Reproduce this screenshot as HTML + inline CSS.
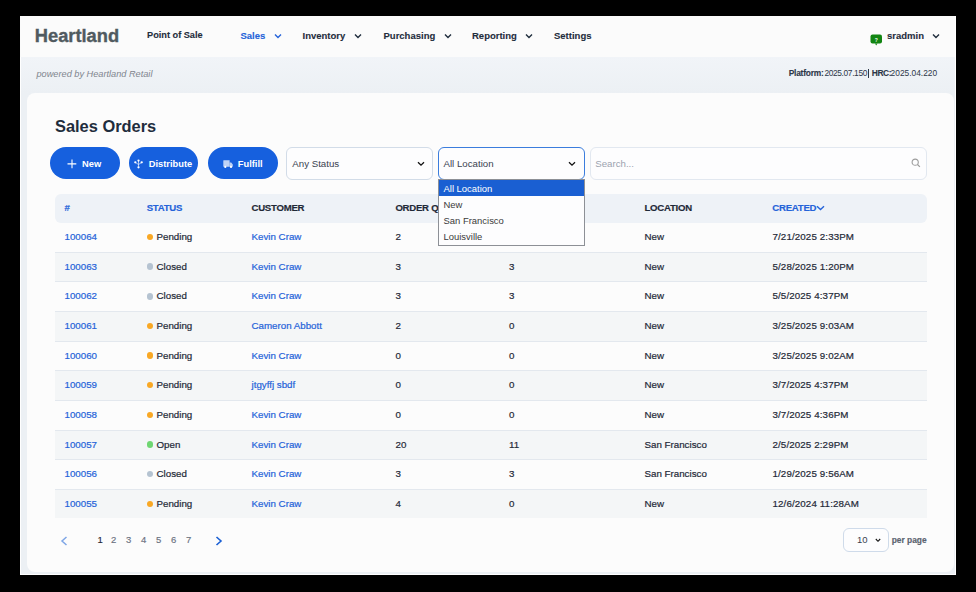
<!DOCTYPE html>
<html><head><meta charset="utf-8">
<style>
*{box-sizing:border-box;margin:0;padding:0}
html,body{width:976px;height:592px;overflow:hidden;background:#000}
body{position:relative;font-family:"Liberation Sans",sans-serif;color:#1f2937}
.a{position:absolute;white-space:nowrap;line-height:1}
#win{position:absolute;left:20px;top:16px;width:936px;height:559px;background:#fff}
#hdr{position:absolute;left:20px;top:16px;width:935px;height:40.5px;background:#fbfbfb}
#sub{position:absolute;left:21px;top:56.5px;width:934px;height:517.5px;background:linear-gradient(#f1f4f8,#ecf0f4 37px)}
#card{position:absolute;left:27px;top:93px;width:927px;height:479px;background:#fcfcfc;border-radius:8px}
.logo{left:34.8px;top:27px;font-size:18.3px;font-weight:bold;color:#505a60;-webkit-text-stroke:0.35px #505a60}
.nav{top:31px;font-size:9.5px;font-weight:bold;color:#1f2d3d;-webkit-text-stroke:0.1px currentColor}
.pw{left:36.5px;top:70px;font-size:9.2px;font-style:italic;color:#7f858e}
.plat{top:69px;font-size:8.4px;color:#2d3748}
.plat.b{-webkit-text-stroke:0.1px currentColor}
.title{left:55px;top:118px;font-size:16.4px;font-weight:bold;color:#1f2d3d}
.btn{position:absolute;top:147.3px;width:69.5px;height:32px;border-radius:16px;background:#1660de}
.bt{top:159.6px;font-size:9.3px;font-weight:bold;color:#fff}
.sel{position:absolute;top:147px;height:32.5px;border:1px solid #d2dce8;border-radius:6px;background:#fdfdfe}
.st{font-size:9.7px;color:#3a4250}
.th{top:203.4px;font-size:9.6px;letter-spacing:-0.25px;font-weight:bold;color:#1f2937;-webkit-text-stroke:0.15px currentColor}
.blue{color:#2563d9}
#thead{position:absolute;left:55px;top:193.5px;width:871.5px;height:29px;background:#eef2f7;border-radius:6px}
.row{position:absolute;left:55px;width:871.5px;height:29.65px;border-top:1px solid #e3e8ee}
.c{position:absolute;top:9.2px;font-size:9.75px;-webkit-text-stroke:0.2px currentColor;line-height:1;color:#1f2937;white-space:nowrap}
.c.l{color:#2563d9}
.row.first{border-top:none;height:29.1px}
.row.first .c{top:9.7px}
.row.first .dot{top:11.3px}
.dot{position:absolute;left:91.6px;top:10.8px;width:6.5px;height:6.5px;border-radius:50%}
#dd{position:absolute;left:438px;top:179.2px;width:147px;height:66.4px;background:#fdfdfe;border:1px solid #8d9096}
.opt{position:absolute;left:0;width:145px;height:16px;font-size:9.45px;color:#3a3a3a;padding-left:4.5px;line-height:17.3px}
.pg{top:534.5px;font-size:9.5px;color:#6b7280;-webkit-text-stroke:0.15px currentColor}
</style></head><body>
<div id="win"></div>
<div id="hdr"></div>
<div id="sub"></div>
<div id="card"></div>

<div class="a logo">Heartland</div>
<div class="a nav" style="left:147px;font-size:9.2px">Point of Sale</div>
<div class="a nav" style="left:240.5px;color:#2563d9">Sales</div>
<svg class="a" style="left:273.5px;top:33px" width="8" height="6" viewBox="0 0 8 6"><path d="M1 1.5 L4 4.5 L7 1.5" fill="none" stroke="#2563d9" stroke-width="1.4"/></svg>
<div class="a nav" style="left:302.5px">Inventory</div>
<svg class="a" style="left:354px;top:33px" width="8" height="6" viewBox="0 0 8 6"><path d="M1 1.5 L4 4.5 L7 1.5" fill="none" stroke="#1f2d3d" stroke-width="1.4"/></svg>
<div class="a nav" style="left:383.5px">Purchasing</div>
<svg class="a" style="left:443.5px;top:33px" width="8" height="6" viewBox="0 0 8 6"><path d="M1 1.5 L4 4.5 L7 1.5" fill="none" stroke="#1f2d3d" stroke-width="1.4"/></svg>
<div class="a nav" style="left:472px">Reporting</div>
<svg class="a" style="left:524.5px;top:33px" width="8" height="6" viewBox="0 0 8 6"><path d="M1 1.5 L4 4.5 L7 1.5" fill="none" stroke="#1f2d3d" stroke-width="1.4"/></svg>
<div class="a nav" style="left:554px">Settings</div>

<svg class="a" style="left:870px;top:33.6px" width="13" height="12" viewBox="0 0 13 12"><rect x="0.5" y="0.5" width="11.5" height="9" rx="2" fill="#128512"/><path d="M5 9.5 L6.2 11.5 L7.5 9.5Z" fill="#128512"/><text x="6.25" y="7.5" font-size="5" font-family="Liberation Sans" font-weight="bold" fill="#fff" text-anchor="middle">?</text></svg>
<div class="a nav" style="left:887px;top:31px;font-size:9.5px">sradmin</div>
<svg class="a" style="left:932px;top:33px" width="8" height="6" viewBox="0 0 8 6"><path d="M1 1.5 L4 4.5 L7 1.5" fill="none" stroke="#1f2d3d" stroke-width="1.4"/></svg>

<div class="a pw">powered by Heartland Retail</div>
<div class="a plat b" style="left:788.7px;font-weight:bold;letter-spacing:-0.22px">Platform:</div>
<div class="a plat" style="left:824.4px;letter-spacing:-0.36px">2025.07.150</div>
<div class="a" style="left:868px;top:69px;width:1px;height:9px;background:#2d3748"></div>
<div class="a plat b" style="left:871.8px;font-weight:bold;letter-spacing:-0.4px">HRC:</div>
<div class="a plat" style="left:890.6px">2025.04.220</div>

<div class="a title">Sales Orders</div>

<div class="btn" style="left:50.3px"></div>
<svg class="a" style="left:67.3px;top:158.8px" width="10" height="10" viewBox="0 0 10 10"><path d="M5 0.5V9.3M0.5 4.9H9.3" stroke="#fff" stroke-width="1.1"/></svg>
<div class="a bt" style="left:82px">New</div>
<div class="btn" style="left:128.8px"></div>
<svg class="a" style="left:134.1px;top:158.5px" width="9" height="10" viewBox="0 0 9 10"><path d="M4.5 1.6V7.6M1.3 3.3L4.5 5.6L7.8 3.3" fill="none" stroke="#fff" stroke-width="0.75" opacity="0.85"/><circle cx="4.5" cy="1.6" r="1.15" fill="#fff"/><circle cx="1.3" cy="3.3" r="1.15" fill="#fff"/><circle cx="7.7" cy="3.3" r="1.15" fill="#fff"/><circle cx="4.5" cy="8.3" r="1.15" fill="#fff"/></svg>
<div class="a bt" style="left:148.8px">Distribute</div>
<div class="btn" style="left:208.1px"></div>
<svg class="a" style="left:223px;top:159.5px" width="10" height="8" viewBox="0 0 10 8"><path d="M0.3 0.6Q0.3 0.3 0.8 0.3H6.6V6.8H0.8Q0.3 6.8 0.3 6.3Z" fill="#fff" opacity="0.72"/><path d="M6.6 2.6H8.2L9.8 4.6V6.8H6.6Z" fill="#fff" opacity="0.72"/><circle cx="2.3" cy="6.9" r="1.1" fill="#fff"/><circle cx="8" cy="6.9" r="1.1" fill="#fff"/></svg>
<div class="a bt" style="left:237.8px">Fulfill</div>

<div class="sel" style="left:286.2px;width:147.1px"></div>
<div class="a st" style="left:292.3px;top:158.7px">Any Status</div>
<svg class="a" style="left:416.5px;top:160.5px" width="8" height="6" viewBox="0 0 8 6"><path d="M1 1.2 L4 4.2 L7 1.2" fill="none" stroke="#111" stroke-width="1.3"/></svg>
<div class="sel" style="left:438px;width:146.6px;border-color:#3b7ddd"></div>
<div class="a st" style="left:443.5px;top:158.7px">All Location</div>
<svg class="a" style="left:567.5px;top:160.5px" width="8" height="6" viewBox="0 0 8 6"><path d="M1 1.2 L4 4.2 L7 1.2" fill="none" stroke="#111" stroke-width="1.3"/></svg>
<div class="sel" style="left:590px;width:336.8px;border-color:#e2e8f0"></div>
<div class="a st" style="left:595.2px;top:158.7px;color:#9ca3af">Search...</div>
<svg class="a" style="left:911.3px;top:158.3px" width="10" height="10" viewBox="0 0 10 10"><circle cx="4.2" cy="4.2" r="3.1" fill="none" stroke="#9c9c9c" stroke-width="1.1"/><path d="M6.5 6.5L8.9 8.9" stroke="#9c9c9c" stroke-width="1.2"/></svg>

<div id="thead"></div>
<div class="a th blue" style="left:64.6px">#</div>
<div class="a th blue" style="left:146.7px">STATUS</div>
<div class="a th" style="left:251.5px">CUSTOMER</div>
<div class="a th" style="left:395.4px">ORDER QTY</div>
<div class="a th" style="left:509px">FULFILLED</div>
<div class="a th" style="left:644.5px">LOCATION</div>
<div class="a th blue" style="left:772.3px">CREATED</div>
<svg class="a" style="left:815.5px;top:205px" width="9" height="6" viewBox="0 0 9 6"><path d="M1 1.2 L4.5 4.5 L8 1.2" fill="none" stroke="#2563d9" stroke-width="1.4"/></svg>

<div class="row first" style="top:222.5px;background:#fcfcfc">
<span class="c l" style="left:9.5px">100064</span>
<span class="dot" style="background:#f9a825"></span><span class="c" style="left:101.5px">Pending</span>
<span class="c l" style="left:196.5px">Kevin Craw</span>
<span class="c" style="left:340.5px">2</span>
<span class="c" style="left:454px">0</span>
<span class="c" style="left:589.5px">New</span>
<span class="c" style="left:717.5px;letter-spacing:0.12px">7/21/2025 2:33PM</span>
</div>
<div class="row" style="top:251.7px;background:#f4f6f7">
<span class="c l" style="left:9.5px">100063</span>
<span class="dot" style="background:#b5c3d1"></span><span class="c" style="left:101.5px">Closed</span>
<span class="c l" style="left:196.5px">Kevin Craw</span>
<span class="c" style="left:340.5px">3</span>
<span class="c" style="left:454px">3</span>
<span class="c" style="left:589.5px">New</span>
<span class="c" style="left:717.5px;letter-spacing:0.12px">5/28/2025 1:20PM</span>
</div>
<div class="row" style="top:281.3px;background:#fcfcfc">
<span class="c l" style="left:9.5px">100062</span>
<span class="dot" style="background:#b5c3d1"></span><span class="c" style="left:101.5px">Closed</span>
<span class="c l" style="left:196.5px">Kevin Craw</span>
<span class="c" style="left:340.5px">3</span>
<span class="c" style="left:454px">3</span>
<span class="c" style="left:589.5px">New</span>
<span class="c" style="left:717.5px;letter-spacing:0.12px">5/5/2025 4:37PM</span>
</div>
<div class="row" style="top:310.9px;background:#f4f6f7">
<span class="c l" style="left:9.5px">100061</span>
<span class="dot" style="background:#f9a825"></span><span class="c" style="left:101.5px">Pending</span>
<span class="c l" style="left:196.5px">Cameron Abbott</span>
<span class="c" style="left:340.5px">2</span>
<span class="c" style="left:454px">0</span>
<span class="c" style="left:589.5px">New</span>
<span class="c" style="left:717.5px;letter-spacing:0.12px">3/25/2025 9:03AM</span>
</div>
<div class="row" style="top:340.6px;background:#fcfcfc">
<span class="c l" style="left:9.5px">100060</span>
<span class="dot" style="background:#f9a825"></span><span class="c" style="left:101.5px">Pending</span>
<span class="c l" style="left:196.5px">Kevin Craw</span>
<span class="c" style="left:340.5px">0</span>
<span class="c" style="left:454px">0</span>
<span class="c" style="left:589.5px">New</span>
<span class="c" style="left:717.5px;letter-spacing:0.12px">3/25/2025 9:02AM</span>
</div>
<div class="row" style="top:370.2px;background:#f4f6f7">
<span class="c l" style="left:9.5px">100059</span>
<span class="dot" style="background:#f9a825"></span><span class="c" style="left:101.5px">Pending</span>
<span class="c l" style="left:196.5px">jtgyffj sbdf</span>
<span class="c" style="left:340.5px">0</span>
<span class="c" style="left:454px">0</span>
<span class="c" style="left:589.5px">New</span>
<span class="c" style="left:717.5px;letter-spacing:0.12px">3/7/2025 4:37PM</span>
</div>
<div class="row" style="top:399.9px;background:#fcfcfc">
<span class="c l" style="left:9.5px">100058</span>
<span class="dot" style="background:#f9a825"></span><span class="c" style="left:101.5px">Pending</span>
<span class="c l" style="left:196.5px">Kevin Craw</span>
<span class="c" style="left:340.5px">0</span>
<span class="c" style="left:454px">0</span>
<span class="c" style="left:589.5px">New</span>
<span class="c" style="left:717.5px;letter-spacing:0.12px">3/7/2025 4:36PM</span>
</div>
<div class="row" style="top:429.5px;background:#f4f6f7">
<span class="c l" style="left:9.5px">100057</span>
<span class="dot" style="background:#6fd672"></span><span class="c" style="left:101.5px">Open</span>
<span class="c l" style="left:196.5px">Kevin Craw</span>
<span class="c" style="left:340.5px">20</span>
<span class="c" style="left:454px">11</span>
<span class="c" style="left:589.5px">San Francisco</span>
<span class="c" style="left:717.5px;letter-spacing:0.12px">2/5/2025 2:29PM</span>
</div>
<div class="row" style="top:459.2px;background:#fcfcfc">
<span class="c l" style="left:9.5px">100056</span>
<span class="dot" style="background:#b5c3d1"></span><span class="c" style="left:101.5px">Closed</span>
<span class="c l" style="left:196.5px">Kevin Craw</span>
<span class="c" style="left:340.5px">3</span>
<span class="c" style="left:454px">3</span>
<span class="c" style="left:589.5px">San Francisco</span>
<span class="c" style="left:717.5px;letter-spacing:0.12px">1/29/2025 9:56AM</span>
</div>
<div class="row" style="top:488.8px;background:#f4f6f7">
<span class="c l" style="left:9.5px">100055</span>
<span class="dot" style="background:#f9a825"></span><span class="c" style="left:101.5px">Pending</span>
<span class="c l" style="left:196.5px">Kevin Craw</span>
<span class="c" style="left:340.5px">4</span>
<span class="c" style="left:454px">0</span>
<span class="c" style="left:589.5px">New</span>
<span class="c" style="left:717.5px;letter-spacing:0.12px">12/6/2024 11:28AM</span>
</div>

<div id="dd">
<div class="opt" style="top:0;height:15.8px;background:#1a5fd2;color:#fff">All Location</div>
<div class="opt" style="top:16px">New</div>
<div class="opt" style="top:32px">San Francisco</div>
<div class="opt" style="top:48px">Louisville</div>
</div>

<svg class="a" style="left:60px;top:536px" width="8" height="10" viewBox="0 0 8 10"><path d="M6.5 1 L2 5 L6.5 9" fill="none" stroke="#7ea6e6" stroke-width="1.5"/></svg>
<div class="a pg" style="left:97.5px;color:#1f2937">1</div>
<div class="a pg" style="left:111px">2</div>
<div class="a pg" style="left:126px">3</div>
<div class="a pg" style="left:141px">4</div>
<div class="a pg" style="left:156px">5</div>
<div class="a pg" style="left:171px">6</div>
<div class="a pg" style="left:186px">7</div>
<svg class="a" style="left:215px;top:536px" width="8" height="10" viewBox="0 0 8 10"><path d="M1.5 1 L6 5 L1.5 9" fill="none" stroke="#1a5fd4" stroke-width="1.6"/></svg>

<div class="sel" style="left:843.2px;top:527.5px;width:45.4px;height:24px;border-color:#cfdbea"></div>
<div class="a pg" style="left:857px;top:534.8px;color:#3a4250;-webkit-text-stroke:0">10</div>
<svg class="a" style="left:875px;top:538px" width="6" height="5" viewBox="0 0 6 5"><path d="M0.8 1 L3 3.3 L5.2 1" fill="none" stroke="#111" stroke-width="1.1"/></svg>
<div class="a pg" style="left:891.7px;font-size:8.4px;font-weight:bold;top:536.2px;color:#5a6370">per page</div>
</body></html>
